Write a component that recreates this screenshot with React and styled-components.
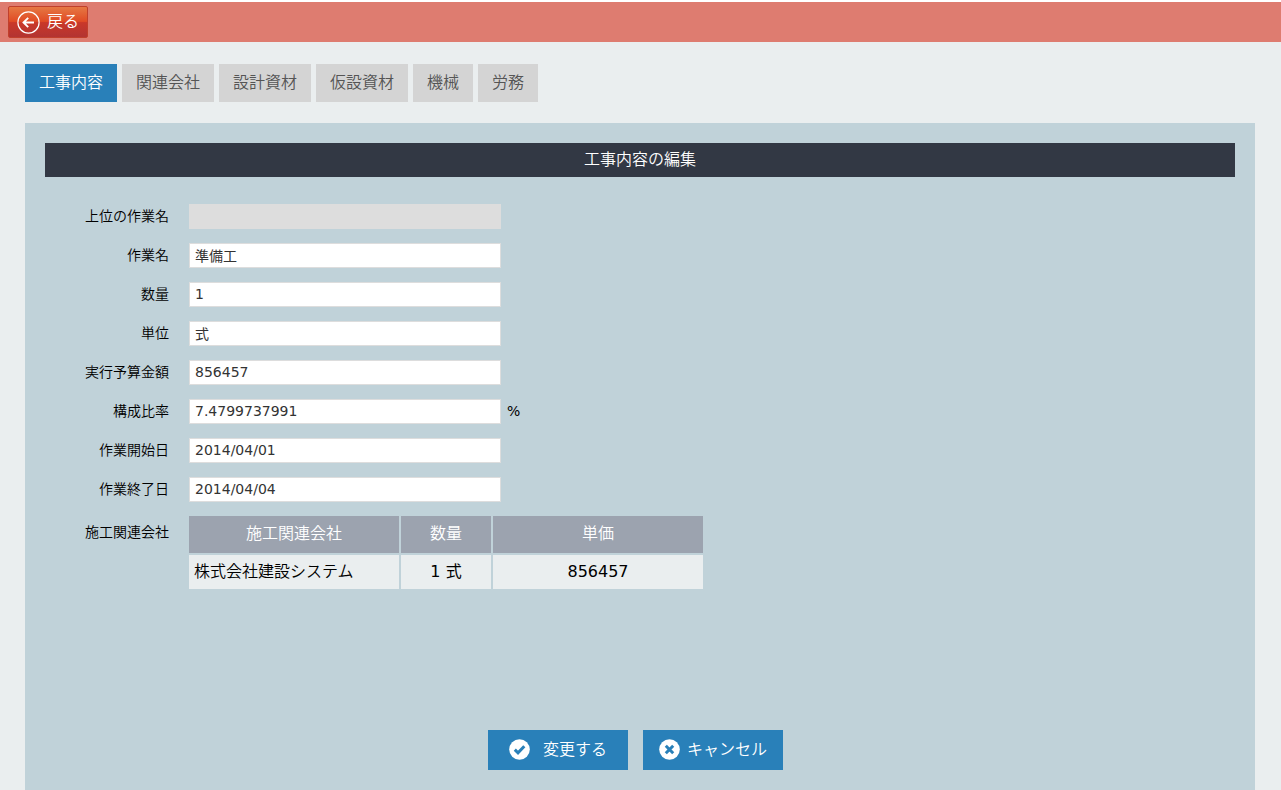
import React, { useState } from "react";
import styled, { createGlobalStyle } from "styled-components";

const GlobalStyle = createGlobalStyle`
  *, *::before, *::after { box-sizing: border-box; }
  body {
    margin: 0;
    background: #eaeeef;
    color: #000;
    font-family: "DejaVu Sans", "Noto Sans CJK JP", sans-serif;
    font-size: 16px;
    font-weight: 350;
    line-height: 24px;
  }
  button, input { font-family: inherit; font-weight: inherit; }
`;

const Page = styled.div`
  min-height: 100vh;
  display: flex;
  flex-direction: column;
`;

const TopBar = styled.header`
  height: 42px;
  padding: 4px 8px;
  border-top: 2px solid #fff;
  background: #de7c70;
`;

const BackButton = styled.button`
  display: flex;
  align-items: center;
  gap: 7px;
  width: 80px;
  height: 32px;
  padding: 0 8px;
  border: 1px solid #c1402c;
  border-radius: 2px;
  background: linear-gradient(#e67843 0%, #e04b25 48%, #c93829 52%, #b33432 100%);
  color: #fff;
  font-size: 16px;
  line-height: 24px;
  white-space: nowrap;
  cursor: pointer;
`;

const Tabs = styled.nav`
  display: flex;
  gap: 5px;
  padding: 22px 25px 21px;
`;

const Tab = styled.button`
  height: 38px;
  padding: 0 14px;
  border: 0;
  background: ${(p) => (p.$active ? "#2980b9" : "#d4d4d4")};
  color: ${(p) => (p.$active ? "#fff" : "#555")};
  font-size: 16px;
  line-height: 36px;
  cursor: pointer;
`;

const Panel = styled.main`
  flex: 1;
  display: flex;
  flex-direction: column;
  margin: 0 26px 0 25px;
  padding: 20px;
  background: #c0d2d9;
`;

const Title = styled.h1`
  margin: 0;
  background: #323844;
  color: #fff;
  font-size: 16px;
  font-weight: inherit;
  line-height: 34px;
  text-align: center;
`;

const Form = styled.form`
  flex: 1;
  display: flex;
  flex-direction: column;
`;

const Fields = styled.div`
  display: grid;
  gap: 14px;
  padding-top: 27px;
`;

const Row = styled.div`
  display: grid;
  grid-template-columns: 124px 1fr;
  column-gap: 20px;
  align-items: start;
  font-size: 14px;
  line-height: 24px;
`;

const Label = styled.label`
  text-align: right;
`;

const TableLabel = styled.span`
  padding-top: 4px;
  text-align: right;
`;

const Control = styled.div`
  display: flex;
  gap: 6px;
  font-weight: 400;
`;

const TextInput = styled.input`
  width: 312px;
  height: 25px;
  padding: 0 5px 2px;
  border: 1px solid #ddd;
  border-radius: 0;
  background: #fff;
  color: #333;
  font-size: 14px;

  &:disabled { background: #ddd; }
`;

const Table = styled.table`
  width: 518px;
  margin: -2px;
  table-layout: fixed;
  border-collapse: separate;
  border-spacing: 2px;
  font-size: 16px;
`;

const HeadCell = styled.th`
  width: ${(p) => p.$width}px;
  height: 37px;
  padding: 0 5px 2px;
  background: #9ca3af;
  color: #fff;
  font-weight: inherit;
`;

const Cell = styled.td`
  height: 34px;
  padding: 0 5px;
  background: #eaeeef;
  font-weight: ${(p) => (p.$numeric ? 400 : "inherit")};
  text-align: ${(p) => (p.$numeric ? "center" : "left")};
`;

const Actions = styled.div`
  display: flex;
  justify-content: center;
  gap: 15px;
  margin-top: auto;
  padding: 60px 9px 0 0;
`;

const ActionButton = styled.button`
  display: flex;
  align-items: center;
  justify-content: center;
  gap: ${(p) => p.$gap}px;
  width: 140px;
  height: 40px;
  padding: 0 0 1px;
  border: 0;
  background: #2980b9;
  color: #fff;
  font-size: 16px;
  line-height: 24px;
  white-space: nowrap;
  cursor: pointer;
`;

const BackIcon = () => (
  <svg width="23" height="23" viewBox="0 0 23 23" fill="none" stroke="#fff" aria-hidden="true">
    <circle cx="11.5" cy="11.5" r="10.6" strokeWidth="1.2" />
    <path d="M17 11.5H7M11.2 6.8L6.5 11.5l4.7 4.7" strokeWidth="1.9" />
  </svg>
);

const CheckIcon = () => (
  <svg width="21" height="21" viewBox="0 0 21 21" fill="none" aria-hidden="true">
    <circle cx="10.5" cy="10.5" r="10.3" fill="#fff" />
    <path d="M5.8 10.6l3.2 3.2 6.3-6.6" stroke="#2980b9" strokeWidth="3" />
  </svg>
);

const CrossIcon = () => (
  <svg width="21" height="21" viewBox="0 0 21 21" fill="none" aria-hidden="true">
    <circle cx="10.5" cy="10.5" r="10.3" fill="#fff" />
    <path d="M6.8 6.8l7.4 7.4M14.2 6.8l-7.4 7.4" stroke="#2980b9" strokeWidth="3" />
  </svg>
);

const tabs = ["工事内容", "関連会社", "設計資材", "仮設資材", "機械", "労務"];

const fields = [
  { id: "parent", label: "上位の作業名", value: "", disabled: true },
  { id: "name", label: "作業名", value: "準備工" },
  { id: "quantity", label: "数量", value: "1" },
  { id: "unit", label: "単位", value: "式" },
  { id: "budget", label: "実行予算金額", value: "856457" },
  { id: "ratio", label: "構成比率", value: "7.4799737991", suffix: "%" },
  { id: "start", label: "作業開始日", value: "2014/04/01" },
  { id: "end", label: "作業終了日", value: "2014/04/04" },
];

export default function App() {
  const [active, setActive] = useState(tabs[0]);
  return (
    <>
      <GlobalStyle />
      <Page>
        <TopBar>
          <BackButton type="button">
            <BackIcon />
            戻る
          </BackButton>
        </TopBar>
        <Tabs>
          {tabs.map((name) => (
            <Tab key={name} type="button" $active={name === active} onClick={() => setActive(name)}>
              {name}
            </Tab>
          ))}
        </Tabs>
        <Panel>
          <Title>工事内容の編集</Title>
          <Form onSubmit={(e) => e.preventDefault()}>
            <Fields>
              {fields.map((f) => (
                <Row key={f.id}>
                  <Label htmlFor={f.id}>{f.label}</Label>
                  <Control>
                    <TextInput id={f.id} type="text" defaultValue={f.value} disabled={f.disabled} />
                    {f.suffix && <span>{f.suffix}</span>}
                  </Control>
                </Row>
              ))}
              <Row>
                <TableLabel id="companies">施工関連会社</TableLabel>
                <Table aria-labelledby="companies">
                  <thead>
                    <tr>
                      <HeadCell scope="col" $width={210}>施工関連会社</HeadCell>
                      <HeadCell scope="col" $width={90}>数量</HeadCell>
                      <HeadCell scope="col" $width={210}>単価</HeadCell>
                    </tr>
                  </thead>
                  <tbody>
                    <tr>
                      <Cell>株式会社建設システム</Cell>
                      <Cell $numeric>1 式</Cell>
                      <Cell $numeric>856457</Cell>
                    </tr>
                  </tbody>
                </Table>
              </Row>
            </Fields>
            <Actions>
              <ActionButton type="submit" $gap={13}>
                <CheckIcon />
                変更する
              </ActionButton>
              <ActionButton type="button" $gap={7}>
                <CrossIcon />
                キャンセル
              </ActionButton>
            </Actions>
          </Form>
        </Panel>
      </Page>
    </>
  );
}
